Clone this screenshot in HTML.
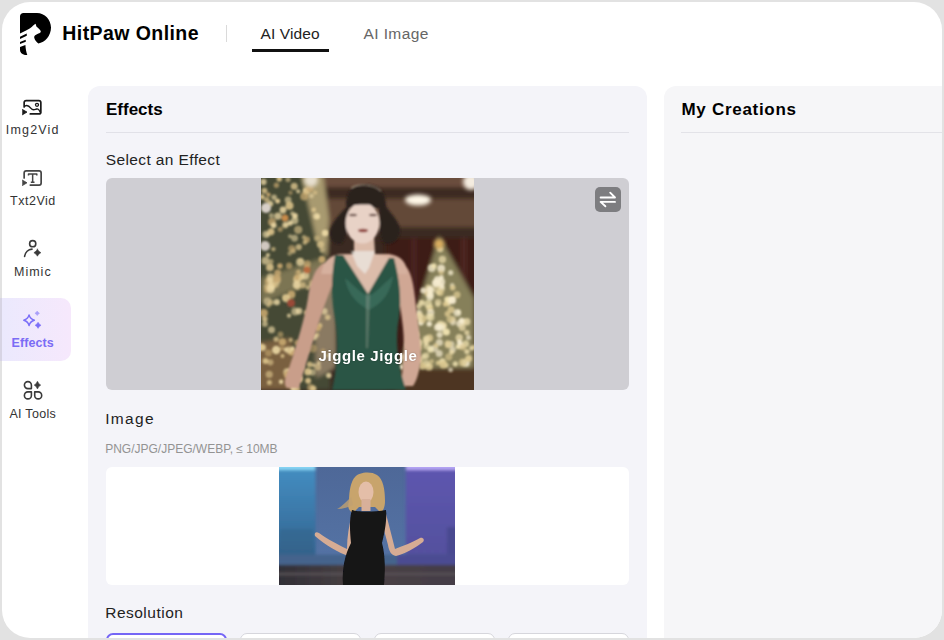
<!DOCTYPE html>
<html><head><meta charset="utf-8">
<style>
*{margin:0;padding:0;box-sizing:border-box}
html,body{width:944px;height:640px;overflow:hidden;background:#e2e2e2}
body{font-family:"Liberation Sans",sans-serif;position:relative}
#page{position:absolute;left:2px;top:2px;width:940px;height:636px;background:#fff;border-radius:28px;overflow:hidden}
.a{position:absolute;white-space:nowrap}
.t{position:absolute;white-space:nowrap;line-height:1}
</style></head><body>
<div class="a" style="left:0;top:298px;width:2px;height:62.5px;background:#d7d4e4"></div>
<div id="page">
  <!-- coordinates inside #page are offset by (-2,-2) -->
  <svg class="a" style="left:18px;top:11px" width="31" height="42" viewBox="0 0 31 42">
    <path fill="#000" d="M0,3.5 C0,1.4 1.4,0 3.5,0 L17,0 C24.7,0 31,6.5 31,14.6 C31,22.8 25,29.6 18.3,30.5 C16.5,29 14.8,27 14.3,25 C14,23.8 14.5,22.6 15.2,22.2 C16.5,21.6 17.5,21 18.4,20.6 C19.6,20.2 20.8,19.6 20.8,18.8 C20.8,18 20.2,17.4 19.6,16.6 C18.8,15.5 17.6,14.4 16.4,13.4 C16,12.6 15.9,11.6 15.6,10.8 C14.5,11.3 13.2,12.5 12,13.8 C10.5,15 9,16 7,17 L0,20.6 Z"/>
    <path fill="#000" d="M0,23.8 L6.7,20.5 L6.8,22.8 L0,26 Z"/>
    <path fill="#000" d="M0,28.9 L5.7,26.8 L5.8,28.8 L0,31.1 Z"/>
    <path fill="#000" d="M0,34 L5.4,32.1 C5.6,36 6.3,39.5 7.3,42 L5,42 C2,41.5 0,39.5 0,37 Z"/>
  </svg>
  <div class="t" style="left:60.3px;top:21.8px;font-size:19.5px;font-weight:bold;color:#000;letter-spacing:0.43px">HitPaw Online</div>
  <div class="a" style="left:224px;top:23px;width:1px;height:17px;background:#dadada"></div>
  <div class="t" style="left:258.5px;top:23.8px;font-size:15.5px;color:#222;letter-spacing:0.12px">AI Video</div>
  <div class="a" style="left:249.5px;top:47.2px;width:77px;height:2.5px;background:#111"></div>
  <div class="t" style="left:361.5px;top:23.8px;font-size:15.5px;color:#666;letter-spacing:0.4px">AI Image</div>

  <!-- sidebar -->
  <div class="a" style="left:0;top:296px;width:69px;height:62.5px;border-radius:0 10px 10px 0;background:linear-gradient(90deg,#ebe9fd,#f6e8fc)"></div>

  <div class="t" style="left:3.8px;top:121.8px;font-size:12.5px;color:#333;letter-spacing:1.18px">Img2Vid</div>
  <div class="t" style="left:8.1px;top:192.9px;font-size:12.5px;color:#333;letter-spacing:0.5px">Txt2Vid</div>
  <div class="t" style="left:12px;top:264px;font-size:12.5px;color:#333;letter-spacing:1px">Mimic</div>
  <div class="t" style="left:9.5px;top:334.8px;font-size:12.5px;font-weight:bold;color:#7b6cf5;letter-spacing:0.1px">Effects</div>
  <div class="t" style="left:7.4px;top:405.8px;font-size:12.5px;color:#333;letter-spacing:0.3px">AI Tools</div>


  <!-- sidebar icons -->
  <svg class="a" style="left:20px;top:97px" width="22" height="18" viewBox="0 0 22 18" fill="none" stroke="#1a1a1a" stroke-width="1.7" stroke-linecap="round" stroke-linejoin="round">
    <path d="M2.15,8 V3.6 Q2.15,1.55 4.2,1.55 H16.8 Q18.85,1.55 18.85,3.6 V12.9 Q18.85,14.95 16.8,14.95 H8.3"/>
    <path d="M2.7,7.2 C5,5.6 7,6.8 9,9.4 C11,12 12.6,10.6 14.5,10 C16.2,9.5 17.6,11.6 18.6,13.8" stroke-width="1.4"/>
    <circle cx="15" cy="5.8" r="1.5" stroke-width="1.3"/>
    <path d="M0.6,10.6 L5,13.1 L0.6,15.7 Z" fill="#1a1a1a" stroke-width="0.8"/>
  </svg>
  <svg class="a" style="left:20px;top:167px" width="22" height="18" viewBox="0 0 22 18" fill="none" stroke="#454545" stroke-width="1.7" stroke-linecap="round" stroke-linejoin="round">
    <path d="M2.15,9 V4 Q2.15,1.95 4.2,1.95 H17.1 Q19.15,1.95 19.15,4 V14 Q19.15,16.05 17.1,16.05 H8.3"/>
    <path d="M6.5,6.6 V5 H14.8 V6.6 M10.65,5 V13.3 M8.8,13.3 H12.5" stroke-width="1.5" stroke-linecap="butt"/>
    <path d="M0.6,11.2 L5,13.8 L0.6,16.4 Z" fill="#454545" stroke-width="0.8"/>
  </svg>
  <svg class="a" style="left:20px;top:236px" width="22" height="22" viewBox="0 0 22 22" fill="none" stroke="#3a3a3a" stroke-width="1.6" stroke-linecap="round">
    <circle cx="10.7" cy="5.7" r="3.1"/>
    <path d="M2.6,18.5 C3.2,14.2 6.3,11.3 10,11.1"/>
    <path d="M15.40,11.20 Q16.52,13.58 18.90,14.70 Q16.52,15.82 15.40,18.20 Q14.28,15.82 11.90,14.70 Q14.28,13.58 15.40,11.20 Z" fill="#3a3a3a" stroke-width="0.6"/>
  </svg>
  <svg class="a" style="left:18px;top:306px" width="26" height="24" viewBox="0 0 26 24" fill="none" stroke="#7b6ff8" stroke-width="1.5" stroke-linejoin="round">
    <path d="M9.06,6.90 Q10.12,11.14 14.36,12.20 Q10.12,13.26 9.06,17.50 Q8.00,13.26 3.76,12.20 Q8.00,11.14 9.06,6.90 Z"/>
    <path d="M18.05,14.20 Q19.01,16.31 21.05,17.30 Q19.01,18.29 18.05,20.40 Q17.09,18.29 15.05,17.30 Q17.09,16.31 18.05,14.20 Z" fill="#7b6ff8" stroke-width="0.5"/>
    <path d="M17.20,3.00 Q17.94,4.56 19.50,5.30 Q17.94,6.04 17.20,7.60 Q16.46,6.04 14.90,5.30 Q16.46,4.56 17.20,3.00 Z" fill="#a99ef9" stroke="#a99ef9" stroke-width="0.5"/>
  </svg>
  <svg class="a" style="left:20px;top:377px" width="22" height="22" viewBox="0 0 22 22" fill="none" stroke="#3a3a3a" stroke-width="1.6" stroke-linejoin="round">
    <path d="M9.4,9.6 H5.9 A3.5,3.5 0 1 1 9.4,6.1 Z"/>
    <path d="M9.4,12.9 V16.4 A3.5,3.5 0 1 1 5.9,12.9 Z"/>
    <path d="M12.7,12.9 H16.2 A3.5,3.5 0 1 1 12.7,16.4 Z"/>
    <path d="M15.45,2.20 Q16.51,4.85 18.75,6.10 Q16.51,7.35 15.45,10.00 Q14.39,7.35 12.15,6.10 Q14.39,4.85 15.45,2.20 Z" fill="#3a3a3a" stroke-width="0.5"/>
  </svg>

  <!-- panel 1 -->
  <div class="a" style="left:86px;top:84px;width:558.5px;height:600px;background:#f4f4f9;border-radius:12px"></div>
  <div class="t" style="left:104px;top:98.5px;font-size:17px;font-weight:bold;color:#000">Effects</div>
  <div class="a" style="left:104px;top:130px;width:523px;height:1px;background:#e1e1e8"></div>
  <div class="t" style="left:103.8px;top:150.3px;font-size:15.5px;color:#222;letter-spacing:0.38px">Select an Effect</div>
  <div class="a" style="left:104px;top:176px;width:523px;height:212px;background:#cfced3;border-radius:6px;overflow:hidden">
    <div class="a" id="img1" style="left:155px;top:0;width:213px;height:212px;overflow:hidden"><svg class="a" style="left:0;top:0" width="213" height="212" viewBox="0 0 213 212">
<defs>
<filter id="b0" x="-30%" y="-30%" width="160%" height="160%"><feGaussianBlur stdDeviation="4"/></filter>
<filter id="b1" x="-20%" y="-20%" width="140%" height="140%"><feGaussianBlur stdDeviation="2.2"/></filter>
<filter id="b2" x="-20%" y="-20%" width="140%" height="140%"><feGaussianBlur stdDeviation="0.9"/></filter>
<filter id="b3" x="-50%" y="-50%" width="200%" height="200%"><feGaussianBlur stdDeviation="1.1"/></filter>
</defs>
<rect width="213" height="212" fill="#3a2820"/>
<g filter="url(#b1)">
 <rect x="40" y="-5" width="180" height="14" fill="#6a4e3e"/>
 <rect x="40" y="9" width="180" height="12" fill="#3e2c22"/>
 <rect x="40" y="21" width="180" height="28" fill="#634838"/>
 <rect x="40" y="49" width="180" height="13" fill="#3a2a20"/>
 <rect x="125" y="60" width="95" height="160" fill="#3d1c18"/>
 <rect x="150" y="60" width="6" height="140" fill="#4a2420"/>
 <rect x="200" y="60" width="6" height="140" fill="#4e2622"/>
 <rect x="55" y="55" width="40" height="130" fill="#3a2a22"/>
 <polygon points="178,58 138,192 213,192 213,120" fill="#86805a"/>
 <rect x="135" y="190" width="85" height="30" fill="#4e3424"/>
 <polygon points="-10,-5 58,-5 66,70 70,212 -10,212" fill="#454a34"/>
 <polygon points="40,-5 62,-5 68,40 66,80 55,60" fill="#a89a70"/>
 <polygon points="0,100 62,80 66,100 0,125" fill="#7c7452"/>
 <polygon points="52,90 75,95 75,190 55,200" fill="#8a7a62"/>
 <polygon points="-5,165 30,160 36,212 -5,212" fill="#7a6040"/>
</g>
<g filter="url(#b3)">
 <circle cx="22.0" cy="32.0" r="3.4" fill="#e8d4a0" opacity="0.88"/>
 <circle cx="6.4" cy="123.6" r="4.0" fill="#f0dca8" opacity="0.56"/>
 <circle cx="29.5" cy="14.8" r="2.2" fill="#c8a870" opacity="0.57"/>
 <circle cx="38.5" cy="200.9" r="3.4" fill="#e0c890" opacity="0.93"/>
 <circle cx="39.2" cy="84.1" r="4.1" fill="#e8d4a0" opacity="0.77"/>
 <circle cx="9.1" cy="88.9" r="3.2" fill="#e0c890" opacity="0.67"/>
 <circle cx="55.5" cy="38.3" r="3.3" fill="#f0dca8" opacity="0.70"/>
 <circle cx="37.2" cy="13.3" r="2.1" fill="#f0dca8" opacity="0.75"/>
 <circle cx="36.2" cy="164.8" r="3.0" fill="#c8a870" opacity="0.69"/>
 <circle cx="16.9" cy="38.1" r="3.7" fill="#e8d4a0" opacity="0.78"/>
 <circle cx="35.7" cy="185.5" r="3.6" fill="#d8c088" opacity="0.79"/>
 <circle cx="5.0" cy="108.5" r="2.4" fill="#d8c088" opacity="0.61"/>
 <circle cx="33.2" cy="8.3" r="3.5" fill="#e0c890" opacity="0.78"/>
 <circle cx="59.5" cy="66.5" r="3.5" fill="#e0c890" opacity="0.75"/>
 <circle cx="54.2" cy="14.6" r="2.2" fill="#d8c088" opacity="0.74"/>
 <circle cx="45.2" cy="12.9" r="3.5" fill="#e0c890" opacity="0.95"/>
 <circle cx="55.9" cy="60.3" r="2.8" fill="#d8c088" opacity="0.56"/>
 <circle cx="31.4" cy="35.6" r="2.3" fill="#e8d4a0" opacity="0.64"/>
 <circle cx="19.5" cy="156.5" r="2.9" fill="#c8a870" opacity="0.58"/>
 <circle cx="30.5" cy="116.5" r="3.9" fill="#c8a870" opacity="0.90"/>
 <circle cx="18.9" cy="88.0" r="2.8" fill="#c8a870" opacity="0.93"/>
 <circle cx="10.3" cy="37.4" r="2.5" fill="#f0dca8" opacity="0.55"/>
 <circle cx="56.5" cy="38.7" r="2.6" fill="#f0dca8" opacity="0.72"/>
 <circle cx="25.1" cy="120.1" r="4.1" fill="#e0c890" opacity="0.93"/>
 <circle cx="44.5" cy="156.8" r="3.0" fill="#e0c890" opacity="0.71"/>
 <circle cx="27.1" cy="21.9" r="3.4" fill="#e8d4a0" opacity="0.63"/>
 <circle cx="7.5" cy="127.4" r="2.2" fill="#e0c890" opacity="0.61"/>
 <circle cx="6.9" cy="77.1" r="2.1" fill="#f0dca8" opacity="0.80"/>
 <circle cx="10.1" cy="53.5" r="2.8" fill="#d8c088" opacity="0.74"/>
 <circle cx="7.8" cy="103.5" r="4.2" fill="#c8a870" opacity="0.74"/>
 <circle cx="5.8" cy="21.7" r="2.8" fill="#d8c088" opacity="0.74"/>
 <circle cx="47.1" cy="109.5" r="2.5" fill="#e0c890" opacity="0.69"/>
 <circle cx="46.9" cy="193.8" r="3.7" fill="#d8c088" opacity="0.94"/>
 <circle cx="58.7" cy="147.6" r="2.6" fill="#d8c088" opacity="0.91"/>
 <circle cx="24.2" cy="47.2" r="3.2" fill="#e0c890" opacity="0.68"/>
 <circle cx="15.2" cy="172.0" r="4.2" fill="#f0dca8" opacity="0.87"/>
 <circle cx="55.6" cy="156.9" r="2.5" fill="#e0c890" opacity="0.75"/>
 <circle cx="49.7" cy="209.8" r="3.7" fill="#c8a870" opacity="0.65"/>
 <circle cx="47.1" cy="202.8" r="3.0" fill="#d8c088" opacity="0.93"/>
 <circle cx="24.8" cy="46.7" r="2.5" fill="#f0dca8" opacity="0.69"/>
 <circle cx="32.8" cy="208.9" r="3.3" fill="#e8d4a0" opacity="0.74"/>
 <circle cx="44.4" cy="169.5" r="2.2" fill="#e8d4a0" opacity="0.91"/>
 <circle cx="53.2" cy="159.0" r="3.1" fill="#f0dca8" opacity="0.72"/>
 <circle cx="43.2" cy="18.4" r="4.1" fill="#c8a870" opacity="0.74"/>
 <circle cx="50.5" cy="18.0" r="2.3" fill="#f0dca8" opacity="0.56"/>
 <circle cx="40.2" cy="98.7" r="3.4" fill="#e0c890" opacity="0.88"/>
 <circle cx="66.7" cy="139.3" r="2.8" fill="#e0c890" opacity="0.77"/>
 <circle cx="1.5" cy="169.5" r="3.6" fill="#e8d4a0" opacity="0.76"/>
 <circle cx="63.5" cy="92.0" r="3.9" fill="#f0dca8" opacity="0.56"/>
 <circle cx="14.5" cy="106.2" r="3.7" fill="#d8c088" opacity="0.65"/>
 <circle cx="28.5" cy="27.8" r="4.0" fill="#d8c088" opacity="0.91"/>
 <circle cx="45.0" cy="172.8" r="3.1" fill="#e0c890" opacity="0.60"/>
 <circle cx="10.3" cy="108.2" r="3.9" fill="#f0dca8" opacity="0.79"/>
 <circle cx="52.8" cy="31.8" r="2.3" fill="#e0c890" opacity="0.84"/>
 <circle cx="37.8" cy="69.1" r="3.1" fill="#e0c890" opacity="0.74"/>
 <circle cx="52.8" cy="187.2" r="2.1" fill="#f0dca8" opacity="0.66"/>
 <circle cx="52.5" cy="107.6" r="3.2" fill="#e8d4a0" opacity="0.73"/>
 <circle cx="41.7" cy="107.2" r="3.1" fill="#d8c088" opacity="0.73"/>
 <circle cx="36.3" cy="101.3" r="4.1" fill="#e0c890" opacity="0.90"/>
 <circle cx="64.1" cy="55.0" r="3.2" fill="#f0dca8" opacity="0.89"/>
 <circle cx="9.3" cy="25.8" r="3.0" fill="#e8d4a0" opacity="0.82"/>
 <circle cx="29.1" cy="45.1" r="2.7" fill="#e8d4a0" opacity="0.91"/>
 <circle cx="10.5" cy="151.8" r="3.5" fill="#f0dca8" opacity="0.65"/>
 <circle cx="9.3" cy="99.2" r="3.6" fill="#e8d4a0" opacity="0.71"/>
 <circle cx="33.1" cy="209.9" r="3.8" fill="#f0dca8" opacity="0.83"/>
 <circle cx="28.6" cy="75.6" r="2.2" fill="#d8c088" opacity="0.56"/>
 <circle cx="37.7" cy="93.4" r="2.0" fill="#d8c088" opacity="0.76"/>
 <circle cx="20.1" cy="203.7" r="2.2" fill="#f0dca8" opacity="0.94"/>
 <circle cx="7.1" cy="56.3" r="2.1" fill="#f0dca8" opacity="0.66"/>
 <circle cx="8.8" cy="89.5" r="4.0" fill="#d8c088" opacity="0.71"/>
 <circle cx="36.5" cy="109.1" r="3.1" fill="#d8c088" opacity="0.59"/>
 <circle cx="3.9" cy="145.9" r="2.9" fill="#e8d4a0" opacity="0.66"/>
 <circle cx="1.1" cy="18.8" r="2.6" fill="#e0c890" opacity="0.89"/>
 <circle cx="4.5" cy="182.9" r="3.0" fill="#d8c088" opacity="0.95"/>
 <circle cx="28.4" cy="194.1" r="3.4" fill="#e8d4a0" opacity="0.76"/>
 <circle cx="16.2" cy="23.2" r="2.4" fill="#e8d4a0" opacity="0.62"/>
 <circle cx="63.4" cy="133.3" r="3.2" fill="#f0dca8" opacity="0.67"/>
 <circle cx="34.0" cy="37.7" r="2.8" fill="#e8d4a0" opacity="0.95"/>
 <circle cx="2.5" cy="3.9" r="3.1" fill="#f0dca8" opacity="0.76"/>
 <circle cx="16.7" cy="94.8" r="3.4" fill="#c8a870" opacity="0.81"/>
 <circle cx="37.1" cy="188.4" r="4.1" fill="#d8c088" opacity="0.83"/>
 <circle cx="56.6" cy="149.8" r="3.4" fill="#c8a870" opacity="0.95"/>
 <circle cx="66.8" cy="177.4" r="2.0" fill="#d8c088" opacity="0.72"/>
 <circle cx="3.8" cy="141.0" r="2.8" fill="#e0c890" opacity="0.82"/>
 <circle cx="19.2" cy="51.3" r="2.6" fill="#c8a870" opacity="0.62"/>
 <circle cx="18.3" cy="0.8" r="2.8" fill="#d8c088" opacity="0.94"/>
 <circle cx="37.2" cy="51.8" r="4.1" fill="#d8c088" opacity="0.64"/>
 <circle cx="12.4" cy="71.1" r="2.2" fill="#d8c088" opacity="0.75"/>
 <circle cx="13.7" cy="107.0" r="2.0" fill="#d8c088" opacity="0.88"/>
 <circle cx="9.8" cy="124.4" r="2.9" fill="#d8c088" opacity="0.67"/>
 <circle cx="15.8" cy="124.1" r="3.2" fill="#f0dca8" opacity="0.81"/>
 <circle cx="48.7" cy="186.4" r="2.9" fill="#d8c088" opacity="0.84"/>
 <circle cx="33.6" cy="60.2" r="3.4" fill="#f0dca8" opacity="0.57"/>
 <circle cx="56.8" cy="189.1" r="3.4" fill="#e0c890" opacity="0.61"/>
 <circle cx="35.6" cy="106.9" r="3.8" fill="#e8d4a0" opacity="0.88"/>
 <circle cx="39.7" cy="189.3" r="3.5" fill="#f0dca8" opacity="0.58"/>
 <circle cx="2.8" cy="135.1" r="4.1" fill="#c8a870" opacity="0.88"/>
 <circle cx="38.0" cy="133.1" r="3.4" fill="#f0dca8" opacity="0.75"/>
 <circle cx="0.2" cy="169.1" r="3.6" fill="#e0c890" opacity="0.91"/>
 <circle cx="6.3" cy="111.5" r="3.6" fill="#c8a870" opacity="0.65"/>
 <circle cx="5.1" cy="56.3" r="3.6" fill="#f0dca8" opacity="0.64"/>
 <circle cx="44.2" cy="97.6" r="3.9" fill="#e8d4a0" opacity="0.74"/>
 <circle cx="46.5" cy="162.6" r="3.4" fill="#f0dca8" opacity="0.58"/>
 <circle cx="10.0" cy="53.8" r="3.6" fill="#d8c088" opacity="0.80"/>
 <circle cx="9.1" cy="102.3" r="3.1" fill="#e8d4a0" opacity="0.83"/>
 <circle cx="45.9" cy="61.7" r="3.1" fill="#c8a870" opacity="0.74"/>
 <circle cx="52.2" cy="210.6" r="3.2" fill="#d8c088" opacity="0.94"/>
 <circle cx="31.2" cy="173.8" r="4.1" fill="#c8a870" opacity="0.95"/>
 <circle cx="26.3" cy="194.3" r="4.0" fill="#e8d4a0" opacity="0.78"/>
 <circle cx="9.6" cy="111.1" r="4.1" fill="#f0dca8" opacity="0.79"/>
 <circle cx="43.0" cy="59.3" r="2.2" fill="#d8c088" opacity="0.64"/>
 <circle cx="61.0" cy="103.1" r="2.1" fill="#e8d4a0" opacity="0.93"/>
 <circle cx="46.3" cy="85.9" r="3.6" fill="#c8a870" opacity="0.69"/>
 <circle cx="21.5" cy="178.1" r="2.0" fill="#d8c088" opacity="0.89"/>
 <circle cx="8.2" cy="196.4" r="3.6" fill="#d8c088" opacity="0.65"/>
 <circle cx="4.4" cy="82.7" r="3.9" fill="#e8d4a0" opacity="0.69"/>
 <circle cx="29.1" cy="58.3" r="2.1" fill="#e8d4a0" opacity="0.57"/>
 <circle cx="45.0" cy="134.6" r="2.3" fill="#d8c088" opacity="0.72"/>
 <circle cx="21.5" cy="163.9" r="3.7" fill="#c8a870" opacity="0.90"/>
 <circle cx="55.2" cy="133.7" r="4.0" fill="#e0c890" opacity="0.77"/>
 <circle cx="48.9" cy="10.5" r="3.6" fill="#c8a870" opacity="0.80"/>
 <circle cx="9.4" cy="184.3" r="3.1" fill="#e0c890" opacity="0.60"/>
 <circle cx="32.1" cy="72.9" r="2.7" fill="#d8c088" opacity="0.71"/>
 <circle cx="16.2" cy="102.4" r="3.5" fill="#e8d4a0" opacity="0.62"/>
 <circle cx="11.0" cy="44.1" r="4.0" fill="#c8a870" opacity="0.77"/>
 <circle cx="30.8" cy="70.6" r="3.7" fill="#c8a870" opacity="0.61"/>
 <circle cx="13.1" cy="19.2" r="2.8" fill="#e8d4a0" opacity="0.68"/>
 <circle cx="25.0" cy="171.6" r="2.4" fill="#e8d4a0" opacity="0.85"/>
 <circle cx="28.1" cy="87.7" r="3.2" fill="#c8a870" opacity="0.66"/>
 <circle cx="51.1" cy="105.6" r="3.3" fill="#d8c088" opacity="0.60"/>
 <circle cx="34.2" cy="133.5" r="3.9" fill="#f0dca8" opacity="0.59"/>
 <circle cx="61.0" cy="81.5" r="3.4" fill="#c8a870" opacity="0.93"/>
 <circle cx="57.7" cy="185.1" r="2.0" fill="#e8d4a0" opacity="0.72"/>
 <circle cx="51.9" cy="170.5" r="4.1" fill="#c8a870" opacity="0.55"/>
 <circle cx="26.6" cy="196.5" r="3.8" fill="#c8a870" opacity="0.94"/>
 <circle cx="16.9" cy="23.1" r="2.3" fill="#e0c890" opacity="0.94"/>
 <circle cx="7.4" cy="175.0" r="3.5" fill="#c8a870" opacity="0.58"/>
 <circle cx="52.8" cy="0.3" r="2.3" fill="#e0c890" opacity="0.92"/>
 <circle cx="43.9" cy="64.4" r="2.3" fill="#d8c088" opacity="0.76"/>
 <circle cx="29.7" cy="161.9" r="2.2" fill="#d8c088" opacity="0.76"/>
 <circle cx="39.6" cy="82.3" r="2.5" fill="#e0c890" opacity="0.55"/>
 <circle cx="36.5" cy="211.2" r="2.6" fill="#d8c088" opacity="0.81"/>
 <circle cx="60.1" cy="100.8" r="2.5" fill="#f0dca8" opacity="0.56"/>
 <circle cx="28.0" cy="137.7" r="2.1" fill="#f0dca8" opacity="0.75"/>
 <circle cx="45.9" cy="89.0" r="2.6" fill="#c8a870" opacity="0.92"/>
 <circle cx="15.4" cy="7.2" r="2.7" fill="#c8a870" opacity="0.69"/>
 <circle cx="27.0" cy="1.4" r="2.6" fill="#e0c890" opacity="0.58"/>
 <circle cx="33.7" cy="42.5" r="3.7" fill="#f0dca8" opacity="0.64"/>
 <circle cx="15.1" cy="161.2" r="2.6" fill="#e0c890" opacity="0.75"/>
 <circle cx="12.7" cy="47.3" r="2.9" fill="#e8d4a0" opacity="0.93"/>
 <circle cx="10.0" cy="83.4" r="2.5" fill="#e0c890" opacity="0.61"/>
 <circle cx="3.5" cy="12.7" r="2.9" fill="#d8c088" opacity="0.84"/>
 <circle cx="67.8" cy="197.5" r="2.7" fill="#f0dca8" opacity="0.81"/>
 <circle cx="35.7" cy="99.1" r="2.7" fill="#c8a870" opacity="0.89"/>
 <circle cx="7.4" cy="16.6" r="2.2" fill="#c8a870" opacity="0.93"/>
 <circle cx="8.4" cy="204.4" r="2.5" fill="#d8c088" opacity="0.86"/>
 <circle cx="21.0" cy="170.4" r="2.2" fill="#c8a870" opacity="0.63"/>
 <circle cx="36.8" cy="94.6" r="2.7" fill="#c8a870" opacity="0.56"/>
 <circle cx="27.9" cy="172.1" r="3.7" fill="#e8d4a0" opacity="0.70"/>
 <circle cx="31.6" cy="170.3" r="2.1" fill="#f0dca8" opacity="0.85"/>
 <circle cx="61.1" cy="71.9" r="2.6" fill="#e0c890" opacity="0.57"/>
 <circle cx="50.8" cy="146.2" r="4.0" fill="#d8c088" opacity="0.55"/>
 <circle cx="51.4" cy="194.3" r="3.4" fill="#e8d4a0" opacity="0.56"/>
 <circle cx="15.9" cy="100.7" r="4.1" fill="#c8a870" opacity="0.87"/>
 <circle cx="62.1" cy="172.7" r="2.3" fill="#c8a870" opacity="0.62"/>
 <circle cx="198.2" cy="159.7" r="3.7" fill="#e8d8a8" opacity="0.81"/>
 <circle cx="165.1" cy="165.6" r="2.3" fill="#e8d8a8" opacity="0.74"/>
 <circle cx="186.7" cy="125.0" r="3.2" fill="#e8d8a8" opacity="0.94"/>
 <circle cx="191.2" cy="120.3" r="2.6" fill="#dcc890" opacity="0.76"/>
 <circle cx="178.4" cy="164.5" r="3.6" fill="#f6ecd0" opacity="0.70"/>
 <circle cx="180.5" cy="110.4" r="3.5" fill="#e8d8a8" opacity="0.75"/>
 <circle cx="159.1" cy="182.5" r="2.5" fill="#f0e2b0" opacity="0.74"/>
 <circle cx="155.4" cy="169.1" r="3.4" fill="#f0e2b0" opacity="0.64"/>
 <circle cx="173.6" cy="170.6" r="3.7" fill="#f6ecd0" opacity="0.61"/>
 <circle cx="152.2" cy="191.4" r="3.2" fill="#f0e2b0" opacity="0.73"/>
 <circle cx="157.5" cy="165.0" r="3.9" fill="#f0e2b0" opacity="0.82"/>
 <circle cx="191.2" cy="107.2" r="2.3" fill="#f6ecd0" opacity="0.65"/>
 <circle cx="183.0" cy="148.0" r="2.6" fill="#f0e2b0" opacity="0.89"/>
 <circle cx="168.7" cy="110.2" r="3.3" fill="#f0e2b0" opacity="0.67"/>
 <circle cx="197.6" cy="134.0" r="2.3" fill="#f0e2b0" opacity="0.88"/>
 <circle cx="178.0" cy="148.2" r="2.9" fill="#f6ecd0" opacity="0.74"/>
 <circle cx="180.5" cy="108.2" r="2.9" fill="#f6ecd0" opacity="0.83"/>
 <circle cx="167.3" cy="114.7" r="3.9" fill="#dcc890" opacity="0.92"/>
 <circle cx="169.8" cy="170.7" r="2.9" fill="#f6ecd0" opacity="0.76"/>
 <circle cx="179.4" cy="146.5" r="3.8" fill="#f0e2b0" opacity="0.80"/>
 <circle cx="207.5" cy="159.5" r="2.5" fill="#f6ecd0" opacity="0.70"/>
 <circle cx="177.1" cy="184.9" r="2.4" fill="#dcc890" opacity="0.86"/>
 <circle cx="197.4" cy="168.6" r="2.7" fill="#f0e2b0" opacity="0.94"/>
 <circle cx="205.8" cy="143.7" r="3.7" fill="#e8d8a8" opacity="0.82"/>
 <circle cx="202.2" cy="143.8" r="3.3" fill="#e8d8a8" opacity="0.89"/>
 <circle cx="168.0" cy="129.9" r="2.9" fill="#f0e2b0" opacity="0.65"/>
 <circle cx="210.8" cy="170.1" r="2.5" fill="#f0e2b0" opacity="0.83"/>
 <circle cx="162.3" cy="112.6" r="3.0" fill="#f6ecd0" opacity="0.83"/>
 <circle cx="167.2" cy="109.6" r="3.1" fill="#e8d8a8" opacity="0.61"/>
 <circle cx="184.4" cy="126.1" r="2.6" fill="#dcc890" opacity="0.89"/>
 <circle cx="165.4" cy="168.3" r="3.1" fill="#f0e2b0" opacity="0.61"/>
 <circle cx="147.8" cy="184.5" r="2.8" fill="#f0e2b0" opacity="0.62"/>
 <circle cx="175.8" cy="111.0" r="3.9" fill="#e8d8a8" opacity="0.61"/>
 <circle cx="147.9" cy="179.6" r="2.7" fill="#e8d8a8" opacity="0.84"/>
 <circle cx="200.5" cy="142.4" r="2.7" fill="#f6ecd0" opacity="0.91"/>
 <circle cx="158.6" cy="170.1" r="2.5" fill="#dcc890" opacity="0.67"/>
 <circle cx="157.7" cy="128.3" r="2.8" fill="#f0e2b0" opacity="0.67"/>
 <circle cx="168.3" cy="145.9" r="2.7" fill="#f6ecd0" opacity="0.91"/>
 <circle cx="150.7" cy="166.0" r="2.4" fill="#f0e2b0" opacity="0.82"/>
 <circle cx="165.0" cy="177.8" r="3.2" fill="#f0e2b0" opacity="0.69"/>
 <circle cx="178.2" cy="175.6" r="3.5" fill="#f6ecd0" opacity="0.69"/>
 <circle cx="165.0" cy="163.2" r="3.0" fill="#e8d8a8" opacity="0.82"/>
 <circle cx="176.7" cy="101.9" r="3.9" fill="#f6ecd0" opacity="0.86"/>
 <circle cx="159.8" cy="144.5" r="3.0" fill="#f6ecd0" opacity="0.91"/>
 <circle cx="154.8" cy="138.8" r="3.3" fill="#e8d8a8" opacity="0.73"/>
 <circle cx="191.1" cy="120.9" r="2.3" fill="#e8d8a8" opacity="0.90"/>
 <circle cx="186.4" cy="135.9" r="2.8" fill="#dcc890" opacity="0.81"/>
 <circle cx="176.8" cy="126.5" r="2.5" fill="#f0e2b0" opacity="0.62"/>
 <circle cx="177.9" cy="114.8" r="2.6" fill="#f0e2b0" opacity="0.92"/>
 <circle cx="169.0" cy="130.0" r="3.4" fill="#dcc890" opacity="0.88"/>
 <circle cx="204.7" cy="165.7" r="3.5" fill="#f0e2b0" opacity="0.73"/>
 <circle cx="170.7" cy="183.2" r="2.3" fill="#dcc890" opacity="0.66"/>
 <circle cx="204.8" cy="184.9" r="3.9" fill="#f6ecd0" opacity="0.85"/>
 <circle cx="157.9" cy="134.8" r="3.0" fill="#f6ecd0" opacity="0.70"/>
 <circle cx="207.6" cy="180.7" r="2.4" fill="#f0e2b0" opacity="0.66"/>
 <circle cx="205.9" cy="173.6" r="2.6" fill="#e8d8a8" opacity="0.86"/>
 <circle cx="162.5" cy="178.8" r="2.8" fill="#e8d8a8" opacity="0.73"/>
 <circle cx="201.9" cy="184.4" r="4.0" fill="#dcc890" opacity="0.77"/>
 <circle cx="140.0" cy="189.0" r="2.6" fill="#f6ecd0" opacity="0.88"/>
 <circle cx="167.4" cy="139.0" r="3.2" fill="#e8d8a8" opacity="0.65"/>
 <circle cx="185.5" cy="154.1" r="3.5" fill="#f0e2b0" opacity="0.90"/>
 <circle cx="187.8" cy="178.8" r="3.6" fill="#dcc890" opacity="0.64"/>
 <circle cx="198.9" cy="145.6" r="3.7" fill="#f6ecd0" opacity="0.77"/>
 <circle cx="147.9" cy="166.9" r="3.4" fill="#f6ecd0" opacity="0.71"/>
 <circle cx="191.7" cy="109.7" r="2.8" fill="#dcc890" opacity="0.90"/>
 <circle cx="169.0" cy="118.9" r="3.6" fill="#f6ecd0" opacity="0.76"/>
 <circle cx="191.6" cy="171.8" r="3.2" fill="#f6ecd0" opacity="0.66"/>
 <circle cx="174.9" cy="167.6" r="2.5" fill="#dcc890" opacity="0.81"/>
 <circle cx="181.4" cy="81.5" r="3.7" fill="#e8d8a8" opacity="0.77"/>
 <circle cx="190.3" cy="166.2" r="3.3" fill="#f6ecd0" opacity="0.63"/>
 <circle cx="207.6" cy="180.4" r="3.5" fill="#dcc890" opacity="0.91"/>
 <circle cx="157.7" cy="181.7" r="3.1" fill="#dcc890" opacity="0.94"/>
 <circle cx="185.3" cy="187.4" r="2.4" fill="#f0e2b0" opacity="0.72"/>
 <circle cx="201.2" cy="149.4" r="3.5" fill="#e8d8a8" opacity="0.76"/>
 <circle cx="189.7" cy="94.7" r="2.6" fill="#f6ecd0" opacity="0.76"/>
 <circle cx="190.7" cy="173.9" r="2.5" fill="#e8d8a8" opacity="0.94"/>
 <circle cx="192.2" cy="141.4" r="2.8" fill="#e8d8a8" opacity="0.71"/>
 <circle cx="152.2" cy="191.6" r="3.5" fill="#f0e2b0" opacity="0.66"/>
 <circle cx="170.7" cy="90.0" r="4.0" fill="#f6ecd0" opacity="0.76"/>
 <circle cx="168.4" cy="160.0" r="3.8" fill="#dcc890" opacity="0.85"/>
 <circle cx="182.1" cy="147.4" r="3.7" fill="#e8d8a8" opacity="0.84"/>
 <circle cx="186.1" cy="121.3" r="2.8" fill="#f0e2b0" opacity="0.91"/>
 <circle cx="176.9" cy="149.2" r="3.8" fill="#f6ecd0" opacity="0.87"/>
 <circle cx="167.2" cy="126.1" r="4.0" fill="#f0e2b0" opacity="0.69"/>
 <circle cx="154.3" cy="156.7" r="3.9" fill="#e8d8a8" opacity="0.78"/>
 <circle cx="178.6" cy="156.8" r="3.1" fill="#f6ecd0" opacity="0.78"/>
 <circle cx="168.8" cy="188.0" r="2.6" fill="#e8d8a8" opacity="0.74"/>
 <circle cx="169.4" cy="116.8" r="3.5" fill="#f6ecd0" opacity="0.80"/>
 <circle cx="168.0" cy="188.7" r="3.9" fill="#dcc890" opacity="0.76"/>
 <circle cx="150.3" cy="185.5" r="2.3" fill="#e8d8a8" opacity="0.76"/>
 <circle cx="180.2" cy="90.5" r="3.9" fill="#f6ecd0" opacity="0.83"/>
 <circle cx="200.3" cy="167.4" r="2.9" fill="#f6ecd0" opacity="0.87"/>
 <circle cx="186.7" cy="165.3" r="3.0" fill="#e8d8a8" opacity="0.69"/>
 <circle cx="160.6" cy="124.7" r="3.0" fill="#f0e2b0" opacity="0.83"/>
 <circle cx="165.2" cy="185.4" r="3.7" fill="#f0e2b0" opacity="0.63"/>
 <circle cx="180.3" cy="103.8" r="3.9" fill="#f6ecd0" opacity="0.82"/>
 <circle cx="149.5" cy="182.1" r="3.6" fill="#e8d8a8" opacity="0.81"/>
 <circle cx="189.6" cy="191.9" r="2.4" fill="#f6ecd0" opacity="0.67"/>
 <circle cx="190.0" cy="131.7" r="3.5" fill="#dcc890" opacity="0.83"/>
 <circle cx="169.4" cy="171.7" r="3.1" fill="#f0e2b0" opacity="0.77"/>
 <circle cx="205.9" cy="154.6" r="2.6" fill="#e8d8a8" opacity="0.79"/>
 <circle cx="180.2" cy="149.8" r="3.7" fill="#f6ecd0" opacity="0.75"/>
 <circle cx="212.9" cy="169.2" r="2.4" fill="#dcc890" opacity="0.77"/>
 <circle cx="191.9" cy="144.4" r="2.8" fill="#f6ecd0" opacity="0.72"/>
 <circle cx="196.4" cy="134.8" r="3.8" fill="#f6ecd0" opacity="0.75"/>
 <circle cx="169.7" cy="134.8" r="3.7" fill="#f6ecd0" opacity="0.72"/>
 <circle cx="175.0" cy="105.1" r="4.0" fill="#f6ecd0" opacity="0.94"/>
 <circle cx="187.1" cy="166.9" r="2.8" fill="#f6ecd0" opacity="0.85"/>
 <circle cx="147.6" cy="191.3" r="2.4" fill="#f0e2b0" opacity="0.74"/>
 <circle cx="179.6" cy="114.8" r="3.2" fill="#dcc890" opacity="0.71"/>
 <circle cx="187.4" cy="166.5" r="3.8" fill="#dcc890" opacity="0.82"/>
 <circle cx="185.0" cy="154.0" r="3.3" fill="#f0e2b0" opacity="0.67"/>
 <circle cx="188.0" cy="121.8" r="3.6" fill="#f0e2b0" opacity="0.83"/>
 <circle cx="145.5" cy="185.6" r="2.2" fill="#e8d8a8" opacity="0.88"/>
 <circle cx="180.2" cy="94.8" r="2.7" fill="#dcc890" opacity="0.61"/>
 <circle cx="181.4" cy="183.4" r="3.1" fill="#f0e2b0" opacity="0.89"/>
 <circle cx="196.0" cy="116.8" r="3.5" fill="#dcc890" opacity="0.76"/>
 <circle cx="182.4" cy="186.6" r="4.0" fill="#dcc890" opacity="0.87"/>
 <circle cx="179.2" cy="71.2" r="3.0" fill="#e8d8a8" opacity="0.82"/>
 <circle cx="158.7" cy="136.8" r="3.0" fill="#e8d8a8" opacity="0.92"/>
 <circle cx="165.4" cy="160.9" r="3.5" fill="#e8d8a8" opacity="0.86"/>
 <circle cx="191.2" cy="122.2" r="3.9" fill="#f6ecd0" opacity="0.92"/>
 <circle cx="142.5" cy="179.2" r="3.4" fill="#f0e2b0" opacity="0.74"/>
 <circle cx="161.4" cy="141.0" r="3.9" fill="#dcc890" opacity="0.81"/>
 <circle cx="161.7" cy="188.1" r="3.5" fill="#dcc890" opacity="0.84"/>
 <circle cx="148.9" cy="167.6" r="2.9" fill="#e8d8a8" opacity="0.82"/>
 <circle cx="169.3" cy="112.1" r="3.6" fill="#f6ecd0" opacity="0.87"/>
 <circle cx="180.5" cy="99.5" r="2.3" fill="#f6ecd0" opacity="0.90"/>
 <circle cx="149.3" cy="172.4" r="3.3" fill="#e8d8a8" opacity="0.73"/>
 <circle cx="189.4" cy="141.2" r="3.8" fill="#dcc890" opacity="0.70"/>
 <circle cx="169.7" cy="139.2" r="3.7" fill="#f0e2b0" opacity="0.70"/>
 <circle cx="148.6" cy="180.2" r="4.0" fill="#e8d8a8" opacity="0.70"/>
 <circle cx="201.8" cy="168.9" r="3.4" fill="#dcc890" opacity="0.72"/>
 <circle cx="194.3" cy="185.8" r="2.6" fill="#f0e2b0" opacity="0.84"/>
 <circle cx="172.9" cy="87.9" r="2.7" fill="#f0e2b0" opacity="0.88"/>
 <circle cx="198.5" cy="164.2" r="2.6" fill="#f6ecd0" opacity="0.91"/>
 <circle cx="177.1" cy="124.3" r="3.3" fill="#e8d8a8" opacity="0.67"/>
 <circle cx="159.7" cy="138.0" r="2.8" fill="#e8d8a8" opacity="0.69"/>
 <circle cx="159.0" cy="142.0" r="2.4" fill="#e8d8a8" opacity="0.95"/>
 <circle cx="5" cy="30" r="5" fill="#d8d0c8"/><circle cx="4" cy="68" r="5" fill="#d0c8c0"/>
 <circle cx="24" cy="40" r="3.5" fill="#c88a4a"/><circle cx="46" cy="92" r="3.5" fill="#b86a40"/><circle cx="30" cy="125" r="4" fill="#9a4a38"/>
</g>
<g filter="url(#b1)">
 <ellipse cx="157" cy="22" rx="13" ry="5.5" fill="#fff8e8"/>
 <circle cx="210" cy="4" r="8" fill="#f4ece0"/>
 <circle cx="50" cy="2" r="7" fill="#e8e0d0"/>
 <circle cx="178" cy="66" r="5" fill="#e0b060"/>
</g>
<g filter="url(#b2)">
 <path d="M66,84 C56,86 50,100 47,120 C44,140 36,165 28,190 C24,200 22,206 26,210 L38,210 C42,195 50,170 56,150 C62,130 70,110 76,95 Z" fill="#c99e8a"/>
 <path d="M138,84 C148,86 152,100 154,120 C156,140 160,160 160,180 C158,195 156,202 152,208 L140,208 C142,190 144,170 142,150 C140,130 136,110 134,95 Z" fill="#d0a794"/>
 <path d="M60,96 C62,82 70,77 80,76 L128,76 C140,78 146,84 146,96 Z" fill="#d6b09e"/>
 <path d="M93,58 L113,58 L114,76 C120,78 126,79 130,80 L107,118 L78,80 C84,79 90,78 93,76 Z" fill="#dcbcaa"/>
 <path d="M86,28 C84,12 94,6 104,6 C116,6 125,12 125,28 C128,34 136,40 139,50 C140,60 133,67 124,66 C120,62 119,56 119,48 L118,30 L88,30 L86,48 C86,56 84,62 80,66 C71,67 67,58 70,50 C73,40 82,34 86,28 Z" fill="#2a201e"/>
 <ellipse cx="101.5" cy="45" rx="17" ry="20.5" fill="#e8d2c6"/>
 <path d="M85,28 C85,14 95,8 104,8 C114,8 121,14 121,28 C112,26 96,26 85,28 Z" fill="#2a201e"/>
 <path d="M90,10 C98,5 112,6 120,13" stroke="#b8a890" stroke-width="1.2" fill="none" opacity="0.7"/>
 <ellipse cx="92" cy="37" rx="4" ry="1.3" fill="#6a5048"/>
 <ellipse cx="112" cy="37" rx="4" ry="1.3" fill="#6a5048"/>
 <ellipse cx="102" cy="52.5" rx="5" ry="1.8" fill="#8e3a36"/>
 <polygon points="90,73 114,73 108,90 104,96 96,88" fill="#ece8e2" opacity="0.75"/>
 <path d="M74,77 L82,77 L107,116 L128,80 L133,80 C138,100 141,120 138,140 C134,160 136,185 145,212 L71,212 C76,190 78,165 74,140 C70,120 70,100 74,77 Z" fill="#2a5445"/>
 <path d="M84,100 C94,108 100,116 107,118 C114,116 120,108 132,98 C130,112 124,124 108,132 C92,124 86,112 84,100 Z" fill="#3d6e5e" opacity="0.8"/>
 <polygon points="105,116 109,116 107,170 105,170" fill="#8a9a8a" opacity="0.45"/>
</g>
</svg><div class="t" style="left:57.5px;top:169.6px;font-size:15px;font-weight:bold;color:#fff;letter-spacing:0.62px;text-shadow:0 0 2px rgba(0,0,0,.3)">Jiggle Jiggle</div></div>
    <div class="a" style="left:489px;top:9px;width:26px;height:25px;border-radius:5px;background:#7d7d80"><svg class="a" style="left:0;top:0" width="26" height="25" viewBox="0 0 26 25" fill="none" stroke="#fff" stroke-width="1.85" stroke-linecap="round" stroke-linejoin="round"><path d="M5.6,10.5 H20 L15.2,5.7"/><path d="M20,14.9 H5.6 L10.4,19.3"/></svg></div>
  </div>
  <div class="t" style="left:103.2px;top:408.9px;font-size:15.5px;color:#222;letter-spacing:1.35px">Image</div>
  <div class="t" style="left:103.2px;top:440.9px;font-size:12px;color:#939393">PNG/JPG/JPEG/WEBP, ≤ 10MB</div>
  <div class="a" style="left:104px;top:465px;width:523px;height:118px;background:#fff;border-radius:6px;overflow:hidden">
    <div class="a" id="img2" style="left:173px;top:0;width:176px;height:118px;overflow:hidden"><svg class="a" style="left:0;top:0" width="176" height="118" viewBox="0 0 176 118">
<defs>
<filter id="c1" x="-20%" y="-20%" width="140%" height="140%"><feGaussianBlur stdDeviation="1.5"/></filter>
<filter id="c2" x="-20%" y="-20%" width="140%" height="140%"><feGaussianBlur stdDeviation="0.7"/></filter>
<filter id="c3" x="-50%" y="-50%" width="200%" height="200%"><feGaussianBlur stdDeviation="2"/></filter>
<linearGradient id="cy" x1="0" y1="0" x2="0" y2="1"><stop offset="0" stop-color="#4590c4"/><stop offset="0.6" stop-color="#3a76a6"/><stop offset="1" stop-color="#30628c"/></linearGradient>
<linearGradient id="wl" x1="0" y1="0" x2="0" y2="1"><stop offset="0" stop-color="#4e6898"/><stop offset="1" stop-color="#5676a8"/></linearGradient>
<linearGradient id="pu" x1="0" y1="0" x2="0" y2="1"><stop offset="0" stop-color="#5e56b0"/><stop offset="1" stop-color="#54509e"/></linearGradient>
<linearGradient id="fl" x1="0" y1="0" x2="1" y2="0"><stop offset="0" stop-color="#302e36"/><stop offset="0.45" stop-color="#4a4244"/><stop offset="1" stop-color="#433c46"/></linearGradient>
</defs>
<rect width="176" height="118" fill="url(#wl)"/>
<g filter="url(#c1)">
 <rect x="-5" y="-5" width="41.5" height="93" fill="url(#cy)"/>
 <rect x="126.8" y="-5" width="55" height="93" fill="url(#pu)"/>
 <rect x="-5" y="-3" width="41.5" height="6" fill="#86d4f4"/>
 <rect x="126.8" y="-3" width="55" height="6" fill="#b4a4f4"/>
 <rect x="1" y="62" width="33" height="25" rx="3" fill="#35648a" opacity="0.5"/>
 <rect x="168" y="60" width="10" height="28" fill="#4a4890"/>
 <rect x="-5" y="87.6" width="186" height="10.3" fill="#44638c"/>
 <rect x="118" y="87.6" width="62" height="10.3" fill="#4c4c92"/>
 <rect x="-5" y="97.9" width="186" height="25" fill="url(#fl)"/>
 <rect x="-5" y="106" width="186" height="2" fill="#5a5258"/>
</g>
<g filter="url(#c2)">
 <path d="M73,47 C70,58 68,70 68,82 C60,78 48,72 40,66 C37,64 35,66 36,69 C46,78 60,86 70,89 C74,88 76,84 77,78 L80,52 Z" fill="#d6ac94"/>
 <path d="M107,47 C110,58 113,70 116,82 C124,79 134,75 141,71 C144,70 146,73 144,75 C136,81 126,87 117,89 C112,88 110,84 109,78 L102,52 Z" fill="#d6ac94"/>
 <path d="M76,10 C80,5 92,4 98,8 C104,12 106,22 106,34 C106,40 104,44 102,46 L96,40 L80,40 L74,46 C70,44 68,40 70,34 C70,24 72,14 76,10 Z" fill="#c8a46c"/>
 <path d="M72,30 C66,36 62,40 58,42 C64,42 70,40 74,38 Z" fill="#c0a070" opacity="0.8"/>
 <ellipse cx="87" cy="25" rx="7.5" ry="10.5" fill="#e4bea8"/>
 <rect x="82.5" y="32" width="9" height="12" fill="#d8b09a"/>
 <path d="M73,43 C78,45 96,45 107,43 C108,52 106,64 103,76 C105,84 107,96 105,118 L64,118 C63,100 66,88 72,76 C71,64 70,52 73,43 Z" fill="#121214"/>
</g>
</svg></div>
  </div>
  <div class="t" style="left:103.2px;top:603.1px;font-size:15.5px;color:#222;letter-spacing:0.5px">Resolution</div>
  <div class="a" style="left:104px;top:631px;width:121px;height:40px;border:2px solid #7566f6;border-radius:7px;background:#fff"></div>
  <div class="a" style="left:238px;top:631px;width:121px;height:40px;border:1px solid #d6d6dc;border-radius:7px;background:#fff"></div>
  <div class="a" style="left:372px;top:631px;width:121px;height:40px;border:1px solid #d6d6dc;border-radius:7px;background:#fff"></div>
  <div class="a" style="left:506px;top:631px;width:121px;height:40px;border:1px solid #d6d6dc;border-radius:7px;background:#fff"></div>

  <!-- panel 2 -->
  <div class="a" style="left:662px;top:84px;width:400px;height:600px;background:#f6f6f8;border-radius:12px"></div>
  <div class="t" style="left:679.5px;top:98.5px;font-size:17px;font-weight:bold;color:#000;letter-spacing:0.7px">My Creations</div>
  <div class="a" style="left:678.5px;top:130px;width:400px;height:1px;background:#e3e3e8"></div>
</div>
</body></html>
